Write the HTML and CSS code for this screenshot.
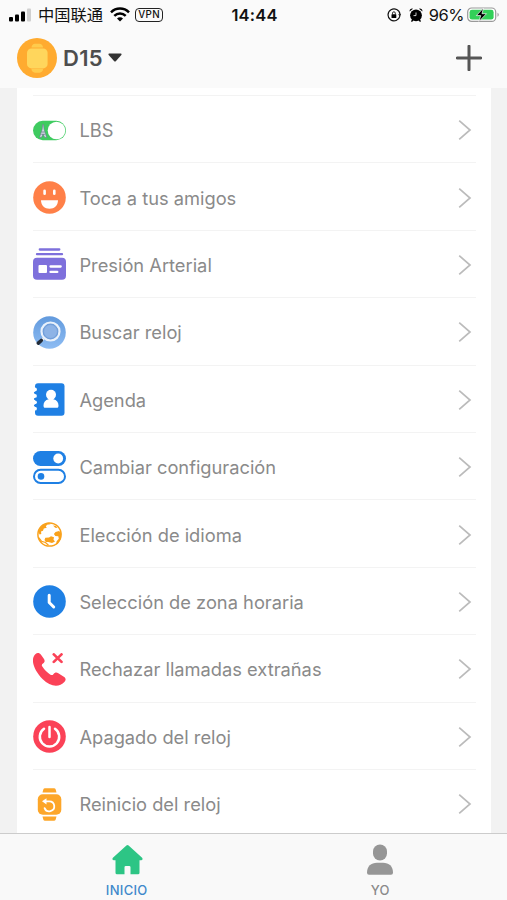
FILE: index.html
```html
<!DOCTYPE html>
<html lang="es">
<head>
    <meta charset="UTF-8">
    <meta name="viewport" content="width=device-width, initial-scale=1.0">
    <title>D15</title>
    <link rel="stylesheet" href="styles.css">
</head>
<body>
    <div class="status-bar">
        <div class="status-left">
            <svg class="signal" width="23" height="14" viewBox="0 0 23 14">
                <rect x="0" y="9" width="4" height="4.5" rx="1"/>
                <rect x="6" y="6.5" width="4" height="7" rx="1"/>
                <rect x="12" y="3.5" width="4" height="10" rx="1"/>
                <rect x="18" y="0.5" width="4" height="13" rx="1" fill="#d0d0d0"/>
            </svg>
            <span class="carrier">中国联通</span>
            <svg class="wifi" width="20" height="15" viewBox="0 0 20 15" fill="none" stroke="#000" stroke-width="2.5">
                <path d="M1 5.3a12.8 12.8 0 0 1 18 0"/>
                <path d="M4.3 8.8a8.1 8.1 0 0 1 11.4 0"/>
                <path d="M10 14.5l-3-3a4.2 4.2 0 0 1 6 0z" fill="#000" stroke="none"/>
            </svg>
            <span class="vpn">VPN</span>
        </div>
        <div class="time">14:44</div>
        <div class="status-right">
            <svg class="lock" width="14" height="14" viewBox="0 0 14 14">
                <path d="M12.9 8.2a6 6 0 1 1 .1-2" fill="none" stroke="#111" stroke-width="1.2"/>
                <path d="M11.2 6.200h3.200l-1.600 2.300z"/>
                <rect x="4.500" y="6.300" width="4.800" height="3.700" rx=".5"/>
                <path d="M5.500 6.500V5.200a1.400 1.400 0 0 1 2.800 0v1.300" fill="none" stroke="#111" stroke-width=".9"/>
            </svg>
            <svg class="alarm" width="14" height="14" viewBox="0 0 14 14">
                <circle cx="7" cy="7.3" r="5.9"/>
                <path d="M.5 3.4A3 3 0 0 1 4 .7zM13.5 3.4A3 3 0 0 0 10 .7zM3.2 11l1.4 1.2L3 14l-1-.8zM10.8 11l-1.4 1.2L11 14l1-.8z"/>
                <path d="M7 4.500v3.100H4.500" fill="none" stroke="#fff" stroke-width=".8"/>
            </svg>
            <span class="percent">96%</span>
            <svg class="battery" width="33" height="16" viewBox="0 0 33 16">
                <rect x=".7" y="1" width="28" height="13.4" rx="4" fill="#fff" stroke="#999" stroke-width="1.2"/>
                <rect x="2.6" y="2.8" width="24" height="9.8" rx="2.4" fill="#32d058"/>
                <path d="M30.5 5.7a2.2 2.2 0 0 1 0 4z" fill="#999"/>
                <path d="M16.5 1L9.3 8.6h4.4L12 14.4 19.5 6.7H15z" stroke="#fff" stroke-width=".7"/>
            </svg>
        </div>
    </div>

    <div class="header">
        <svg class="avatar" width="40" height="40" viewBox="0 0 40 40">
            <circle cx="20" cy="20" r="20" fill="#ffab30"/>
            <path d="M14.500 9.500a3.500 3.500 0 0 1 3.500-3.700h4.500a3.500 3.500 0 0 1 3.500 3.700zM14.500 31a3.500 3.500 0 0 0 3.500 3.700h4.500a3.500 3.500 0 0 0 3.500-3.700z" fill="#ffcb4c"/>
            <rect x="10" y="10.400" width="20.600" height="20" rx="4.500" fill="#ffd65c"/>
        </svg>
        <span class="device">D15</span>
        <svg class="caret" width="14" height="9" viewBox="0 0 14 9">
            <path d="M1.200.5h11.600q1.300.4.5 1.500L8 7.900q-1 1-2 0L.7 2Q-.1.900 1.200.5z" fill="#333"/>
        </svg>
        <svg class="add" width="26" height="26" viewBox="0 0 26 26">
            <path d="M13 1.200v23.600M1.200 13h23.600" stroke="#555" stroke-width="3" stroke-linecap="round"/>
        </svg>
    </div>

    <div class="content">
        <ul class="menu">
            <li>
                <svg class="icon" viewBox="0 0 33 33">
                    <rect x="0" y="6.800" width="33" height="19.400" rx="9.700" fill="#3fcb60"/>
                    <circle cx="23.500" cy="16.500" r="8.800" fill="#fff"/>
                    <path d="M9.700 10.500h.8l.6 5 2.600 8h-1.900l-1.700-3.200-1.700 3.200H6.500l2.600-8z" fill="#d5dce5" stroke="#65758c" stroke-width=".6"/>
                    <path d="M8.600 18h3M8.300 20.300h3.600" stroke="#65758c" stroke-width=".8"/>
                </svg>
                <span class="label">LBS</span>
                <svg class="arrow" viewBox="0 0 14 22"><path d="M1.200 1.700L12 11 1.200 20.300"/></svg>
            </li>
            <li>
                <svg class="icon" viewBox="0 0 33 33">
                    <circle cx="16.500" cy="16.500" r="16.300" fill="#ff8048"/>
                    <rect x="10.300" y="8.500" width="2.600" height="5.500" rx="1.300" fill="#fff"/>
                    <rect x="20" y="8.500" width="2.600" height="5.500" rx="1.300" fill="#fff"/>
                    <path d="M8 19.200h17c0 5.200-3.600 8.500-8.500 8.500S8 24.400 8 19.200z" fill="#fff"/>
                </svg>
                <span class="label">Toca a tus amigos</span>
                <svg class="arrow" viewBox="0 0 14 22"><path d="M1.200 1.700L12 11 1.200 20.300"/></svg>
            </li>
            <li>
                <svg class="icon" viewBox="0 0 33 33">
                    <path d="M6.800 1.500h19.500M4 6.200h25" stroke="#7e70dc" stroke-width="2.300" stroke-linecap="round"/>
                    <rect x="0" y="9.800" width="33" height="22" rx="4" fill="#7e70dc"/>
                    <rect x="5.500" y="17" width="8.500" height="8" rx="1" fill="#fff"/>
                    <path d="M17.500 18.500h10.200M17.500 23.900h6.800" stroke="#fff" stroke-width="2.300" stroke-linecap="round"/>
                </svg>
                <span class="label">Presión Arterial</span>
                <svg class="arrow" viewBox="0 0 14 22"><path d="M1.200 1.700L12 11 1.200 20.300"/></svg>
            </li>
            <li>
                <svg class="icon" viewBox="0 0 33 33">
                    <defs>
                        <linearGradient id="lensBg" x1="0" y1="0" x2="0" y2="1">
                            <stop offset="0" stop-color="#629add"/>
                            <stop offset="1" stop-color="#8dbcf3"/>
                        </linearGradient>
                    </defs>
                    <circle cx="16.500" cy="16.500" r="16.300" fill="url(#lensBg)"/>
                    <path d="M10.500 22.500L8 25" stroke="#e6eef8" stroke-width="2.500"/>
                    <path d="M8.300 24.500l-3 2.600" stroke="#222b38" stroke-width="3.600" stroke-linecap="round"/>
                    <circle cx="17.500" cy="15.500" r="9" fill="#6d9ddb" stroke="#e9f1fb" stroke-width="2.200"/>
                    <circle cx="17.500" cy="15.500" r="6.900" fill="#8db3e6" stroke="#6c98d2" stroke-width=".5"/>
                </svg>
                <span class="label">Buscar reloj</span>
                <svg class="arrow" viewBox="0 0 14 22"><path d="M1.200 1.700L12 11 1.200 20.300"/></svg>
            </li>
            <li>
                <svg class="icon" viewBox="0 0 33 33">
                    <rect x="2" y=".3" width="29.500" height="32.500" rx="3" fill="#1f80e4"/>
                    <g fill="#fff">
                        <circle cx="2" cy="6.500" r="1.900"/><circle cx="2" cy="12.900" r="1.900"/>
                        <circle cx="2" cy="19.300" r="1.900"/><circle cx="2" cy="25.700" r="1.900"/>
                    </g>
                    <path d="M1.900 9.700h3M1.900 16.100h3M1.900 22.500h3" stroke="#1f80e4" stroke-width="2" stroke-linecap="round"/>
                    <circle cx="18" cy="11.800" r="5" fill="#fff"/>
                    <path d="M15.700 14h4.600v2.300c3.500.8 5.200 3 5.200 6.200 0 1.700-.5 2.300-1.500 2.300H12c-1 0-1.500-.6-1.500-2.300 0-3.200 1.700-5.400 5.200-6.200z" fill="#fff"/>
                </svg>
                <span class="label">Agenda</span>
                <svg class="arrow" viewBox="0 0 14 22"><path d="M1.200 1.700L12 11 1.200 20.300"/></svg>
            </li>
            <li>
                <svg class="icon" viewBox="0 0 33 33">
                    <rect x="0" y="0" width="33" height="15" rx="7.500" fill="#1f80e4"/>
                    <circle cx="25.200" cy="7.500" r="4.900" fill="#fff"/>
                    <rect x="1" y="18.800" width="31" height="13.200" rx="6.600" fill="#fff" stroke="#1f80e4" stroke-width="2"/>
                    <circle cx="8" cy="25.400" r="3.300" fill="#1f80e4"/>
                </svg>
                <span class="label">Cambiar configuración</span>
                <svg class="arrow" viewBox="0 0 14 22"><path d="M1.200 1.700L12 11 1.200 20.300"/></svg>
            </li>
            <li>
                <svg class="icon" viewBox="0 0 33 33">
                    <circle cx="16.500" cy="16.500" r="11.600" fill="#fff" stroke="#f9a11b" stroke-width="1.500"/>
                    <path d="M5.500 14C7 8.500 11 5.500 16 4.800l1.500 1.400-3.500.6-1.200 1.700 1 1.200-3 .9-.8 2.200-2 .8.300 2.400-1.800.6z" fill="#f9a11b"/>
                    <path d="M20 7.500l3 .6 1.500 2-2.300-.3zM28.300 15l-2.300-2-3.500.9-1.600 2.200 1.400 1.900 3 .3.500 2.500-2.200 2.400-.4 3-3 1.900 4.500-2 3-5z" fill="#f9a11b"/>
                    <path d="M12.300 19.800l3.700-.3 2-1.200 3 .9-.5 2.600 1.500 1.800-3 1.500-3.700-1.200-2.500.2-1.300-2z" fill="#f9a11b"/>
                    <path d="M5.500 19.500l3 3.700 4 1.300 3 2.700" fill="none" stroke="#f9a11b" stroke-width="1.200"/>
                </svg>
                <span class="label">Elección de idioma</span>
                <svg class="arrow" viewBox="0 0 14 22"><path d="M1.200 1.700L12 11 1.200 20.300"/></svg>
            </li>
            <li>
                <svg class="icon" viewBox="0 0 33 33">
                    <circle cx="16.500" cy="16.500" r="16.300" fill="#1f80e4"/>
                    <path d="M16.200 10.300v7.200l4.500 4.500" fill="none" stroke="#fff" stroke-width="3" stroke-linecap="round" stroke-linejoin="round"/>
                </svg>
                <span class="label">Selección de zona horaria</span>
                <svg class="arrow" viewBox="0 0 14 22"><path d="M1.200 1.700L12 11 1.200 20.300"/></svg>
            </li>
            <li>
                <svg class="icon" viewBox="0 0 33 33">
                    <path d="M2.300 1.200C4.300-.6 6.500-.3 8 1.800l3 4.300c1.100 1.700.7 3.200-1 4.400-1.500 1-1.500 1.900-.5 3.300 2 3 4.600 5.500 7.600 7.600 1.500 1 2.400 1 3.500-.5 1.300-1.700 3-2 4.700-.7l5.500 3.600c2.100 1.400 2.400 3 .8 4.900C26 35 17.500 34 9.500 26 1 17.500-3 6.500 2.300 1.200z" fill="#fb4257"/>
                    <path d="M20.800 1.400l7.700 7.500M28.500 1.400l-7.700 7.500" stroke="#fb4257" stroke-width="2.700" stroke-linecap="round"/>
                </svg>
                <span class="label">Rechazar llamadas extrañas</span>
                <svg class="arrow" viewBox="0 0 14 22"><path d="M1.200 1.700L12 11 1.200 20.300"/></svg>
            </li>
            <li>
                <svg class="icon" viewBox="0 0 33 33">
                    <circle cx="16.500" cy="16.500" r="16.300" fill="#fb4257"/>
                    <path d="M11 8.800a9.700 9.700 0 1 0 11 0M16.500 7v10" fill="none" stroke="#fff" stroke-width="2.500" stroke-linecap="round"/>
                </svg>
                <span class="label">Apagado del reloj</span>
                <svg class="arrow" viewBox="0 0 14 22"><path d="M1.200 1.700L12 11 1.200 20.300"/></svg>
            </li>
            <li>
                <svg class="icon" viewBox="0 0 33 33">
                    <path d="M9.500 4.500l.8-3Q10.700.2 12 .2h9Q22.300.2 22.700 1.500l.8 3zM9.500 28.500l.8 3q.4 1.300 1.700 1.300h9q1.300 0 1.700-1.300l.8-3z" fill="#fda629"/>
                    <rect x="4.800" y="6.200" width="23.500" height="20.600" rx="5" fill="#fda629"/>
                    <path d="M11.500 13.300h4.800a5 5 0 1 1-4.700 6.800" fill="none" stroke="#fff" stroke-width="1.800" stroke-linecap="round"/>
                    <path d="M13.500 10.200v6.200l-4.500-3.100z" fill="#fff"/>
                </svg>
                <span class="label">Reinicio del reloj</span>
                <svg class="arrow" viewBox="0 0 14 22"><path d="M1.200 1.700L12 11 1.200 20.300"/></svg>
            </li>
        </ul>
    </div>

    <div class="tab-bar">
        <div class="tab active">
            <svg width="32" height="32" viewBox="0 0 32 32" fill="#2dc585">
                <path d="M15.400 1.500q1.100-1 2.200 0l13.500 12.300q1.300 1.900-.7 2.500H28.500v12.500q0 1.500-1.500 1.500H19.500v-7q0-1.300-1.300-1.300h-3.400q-1.300 0-1.300 1.300v7H6q-1.500 0-1.500-1.500V16.300H2.600q-2-.6-.7-2.500z"/>
            </svg>
            <span class="tab-label">INICIO</span>
        </div>
        <div class="tab">
            <svg width="32" height="32" viewBox="0 0 32 32" fill="#969696">
                <rect x="9" y=".5" width="14" height="16" rx="7"/>
                <path d="M3 28.800c0-6.500 4-10 10-10h6c6 0 10 3.500 10 10q0 2-2 2H5q-2 0-2-2z"/>
            </svg>
            <span class="tab-label">YO</span>
        </div>
    </div>
</body>
</html>
```

FILE: styles.css
```css
* {
    box-sizing: border-box;
}
body {
    display: flex;
    flex-direction: column;
    height: 900px;
    margin: 0;
    overflow: hidden;
    background-color: #f2f2f2;
    color: #8a8a8a;
    font-family: Inter, "Noto Sans CJK SC", sans-serif;
}
svg {
    display: block;
    flex: none;
}
.status-bar {
    display: grid;
    grid-template-columns: 1fr auto 1fr;
    align-items: center;
    height: 29px;
    padding: 0 7px 0 9px;
    background-color: #fafafa;
    color: #111;
    white-space: nowrap;
}
.status-left, .status-right {
    display: flex;
    align-items: center;
}
.status-right {
    justify-content: flex-end;
}
.carrier {
    margin-left: 6px;
    font-family: "Noto Sans CJK SC", sans-serif;
    font-size: 16.3px;
    line-height: 29px;
}
.wifi {
    margin-left: 7px;
}
.vpn {
    width: 28px;
    height: 14px;
    margin-left: 5px;
    border: 1px solid #222;
    border-radius: 4px;
    font-size: 9.8px;
    font-weight: 500;
    line-height: 12px;
    letter-spacing: 0.4px;
    text-align: center;
}
.time {
    font-size: 16.5px;
    font-weight: 600;
    letter-spacing: 0.2px;
}
.alarm {
    margin-left: 8px;
}
.percent {
    margin-left: 6px;
    font-size: 16.5px;
    letter-spacing: -0.5px;
}
.battery {
    margin-left: 3px;
}
.header {
    display: flex;
    align-items: center;
    height: 59px;
    padding: 0 25px 2px 17px;
    background-color: #fafafa;
}
.device {
    margin-left: 6px;
    color: #4d4d4d;
    font-size: 22px;
    font-weight: 600;
    letter-spacing: 0.3px;
}
.caret {
    margin-left: 5px;
}
.add {
    margin-left: auto;
}
.content {
    flex: 1;
    min-height: 0;
    padding: 0 16px 0 17px;
    overflow: hidden;
}
.menu {
    margin: 0;
    padding: 7px 15px 0 16px;
    background-color: #fff;
    list-style: none;
}
.menu li {
    display: flex;
    align-items: center;
    height: 67.4px;
    padding-top: 2px;
    border-top: 1px solid #f3f3f3;
}
.icon {
    width: 33px;
    height: 33px;
}
.label {
    margin-left: 13.4px;
    font-size: 18.3px;
    white-space: nowrap;
}
.arrow {
    width: 14px;
    height: 22px;
    margin-left: auto;
    margin-right: 4.5px;
    fill: none;
    stroke: #bbb;
    stroke-width: 1.7;
}
.tab-bar {
    display: flex;
    height: 67px;
    border-top: 1px solid #ccc;
    background-color: #f9f9f9;
}
.tab {
    display: flex;
    flex: 1;
    flex-direction: column;
    align-items: center;
    padding-top: 10px;
}
.tab-label {
    margin-top: 6px;
    font-size: 13px;
    font-weight: 500;
    line-height: 16px;
    letter-spacing: 0.3px;
}
.active {
    color: #3f88cb;
}
```
